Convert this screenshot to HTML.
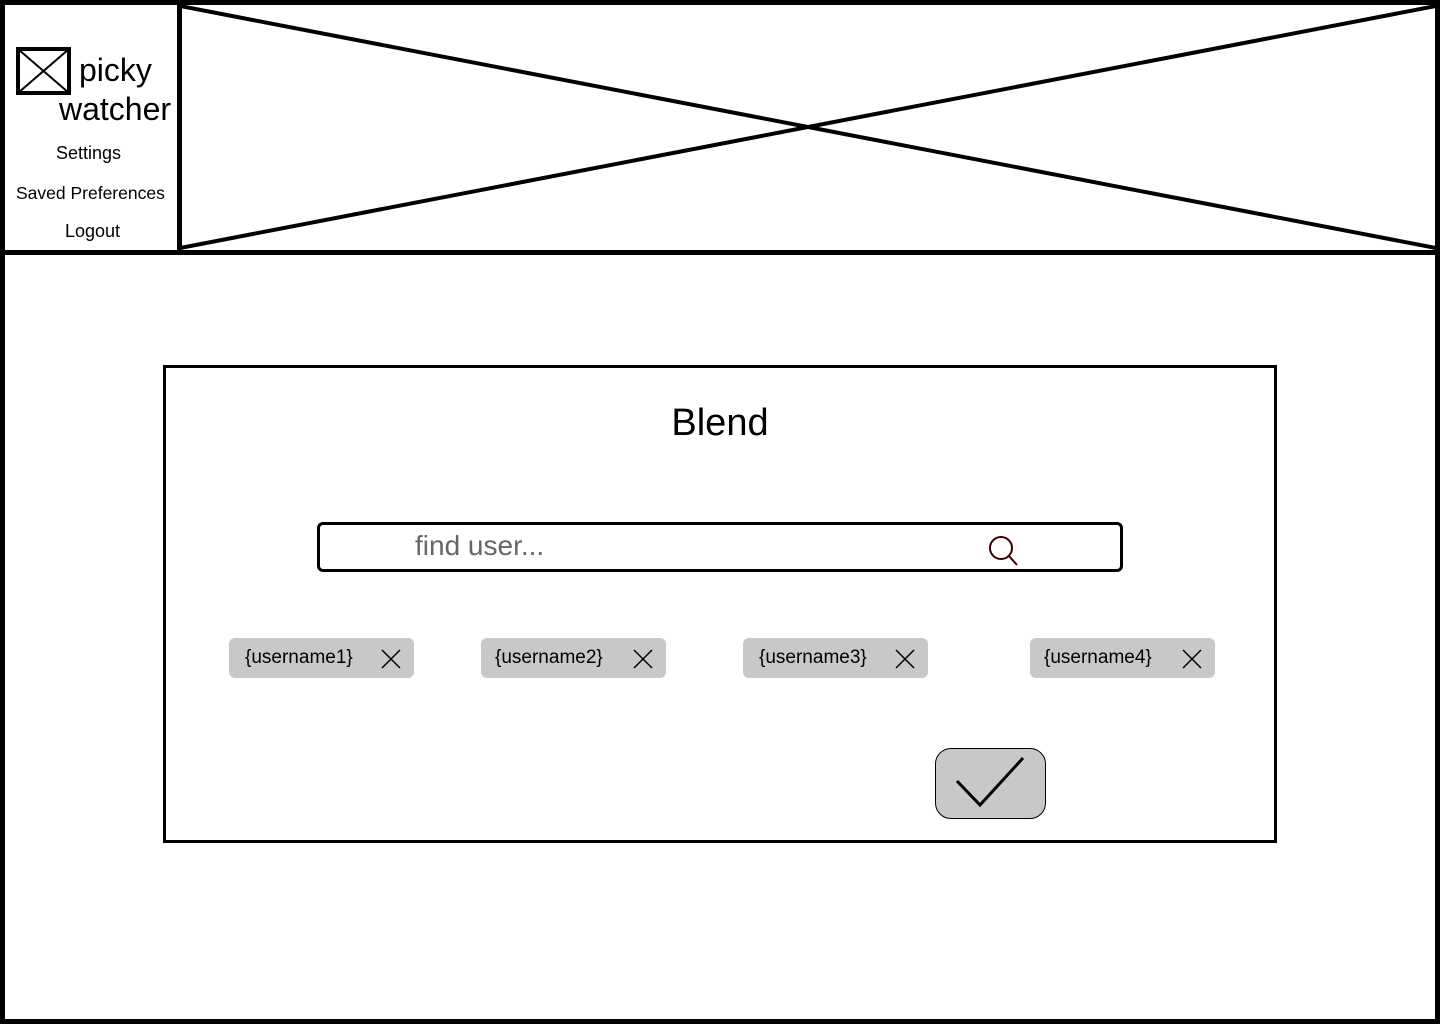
<!DOCTYPE html>
<html><head><style>
*{margin:0;padding:0;box-sizing:border-box}
body{width:1440px;height:1024px;position:relative;background:#fff;font-family:"Liberation Sans","DejaVu Sans",sans-serif;color:#000;overflow:hidden}
.a{position:absolute}
.chip{position:absolute;top:638px;width:185px;height:40px;background:#c8c8c8;border-radius:6px;font-size:19px;line-height:40px;padding-left:16px}
.chip svg{position:absolute;right:12px;top:10px}
</style></head><body>
<div class="a" style="left:0;top:0;width:1440px;height:1024px;border:5px solid #000"></div>
<div class="a" style="left:0;top:250px;width:1440px;height:5px;background:#000"></div>
<div class="a" style="left:177px;top:0;width:5px;height:253px;background:#000"></div>
<svg class="a" style="left:180px;top:4px" width="1256" height="248"><line x1="0" y1="244" x2="1256" y2="2" stroke="#000" stroke-width="4"/><line x1="0" y1="2" x2="1256" y2="244" stroke="#000" stroke-width="4"/></svg>
<svg class="a" style="left:16px;top:47px" width="55" height="48"><rect x="2" y="2" width="51" height="44" fill="none" stroke="#000" stroke-width="4"/><line x1="2" y1="2" x2="53" y2="46" stroke="#000" stroke-width="2"/><line x1="53" y1="2" x2="2" y2="46" stroke="#000" stroke-width="2"/></svg>
<div class="a" style="left:79px;top:51px;font-size:32px;line-height:38px">picky</div>
<div class="a" style="left:59px;top:90px;font-size:32px;line-height:38px">watcher</div>
<div class="a" style="left:56px;top:143px;font-size:18px">Settings</div>
<div class="a" style="left:16px;top:183px;font-size:17.5px">Saved Preferences</div>
<div class="a" style="left:65px;top:221px;font-size:18px">Logout</div>
<div class="a" style="left:163px;top:365px;width:1114px;height:478px;border:3px solid #000"></div>
<div class="a" style="left:0;width:1440px;text-align:center;top:402px;font-size:38px">Blend</div>
<div class="a" style="left:317px;top:522px;width:806px;height:50px;border:3px solid #000;border-radius:6px"></div>
<div class="a" style="left:415px;top:530px;font-size:28px;color:#666">find user...</div>
<svg class="a" style="left:987px;top:534px" width="32" height="34"><circle cx="14" cy="14" r="11" fill="none" stroke="#3a0000" stroke-width="2"/><line x1="22" y1="22" x2="30" y2="31" stroke="#3a0000" stroke-width="2"/></svg>
<div class="chip" style="left:229px">{username1}<svg width="22" height="22"><path d="M2 2L20 20M20 2L2 20" stroke="#000" stroke-width="1.5"/></svg></div>
<div class="chip" style="left:481px;padding-left:14px">{username2}<svg width="22" height="22"><path d="M2 2L20 20M20 2L2 20" stroke="#000" stroke-width="1.5"/></svg></div>
<div class="chip" style="left:743px">{username3}<svg width="22" height="22"><path d="M2 2L20 20M20 2L2 20" stroke="#000" stroke-width="1.5"/></svg></div>
<div class="chip" style="left:1030px;padding-left:14px">{username4}<svg width="22" height="22"><path d="M2 2L20 20M20 2L2 20" stroke="#000" stroke-width="1.5"/></svg></div>
<div class="a" style="left:935px;top:748px;width:111px;height:71px;background:#c8c8c8;border:1px solid #000;border-radius:16px"></div>
<svg class="a" style="left:950px;top:755px" width="80" height="60"><path d="M7 26L30 50L73 3" fill="none" stroke="#000" stroke-width="3"/></svg>
</body></html>
